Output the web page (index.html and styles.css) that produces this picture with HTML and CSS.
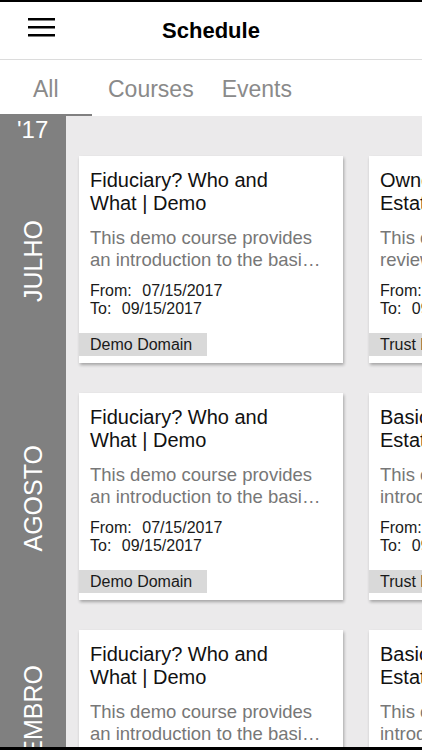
FILE: index.html
```html
<!DOCTYPE html>
<html lang="en">
<head>
    <meta charset="UTF-8">
    <meta name="viewport" content="width=device-width, initial-scale=1.0">
    <title>Schedule</title>
    <link rel="stylesheet" href="styles.css">
</head>
<body>
    <div class="app">
        <header class="top-bar">
            <div class="menu-button">
                <svg width="27" height="19" viewBox="0 0 27 19">
                    <rect x="0" y="0" width="27" height="2.5" fill="#000"/>
                    <rect x="0" y="8" width="27" height="2.5" fill="#000"/>
                    <rect x="0" y="16" width="27" height="2.5" fill="#000"/>
                </svg>
            </div>
            <h1 class="title">Schedule</h1>
            <div></div>
        </header>

        <nav class="tabs">
            <div class="tab tab-all active">All</div>
            <div class="tab">Courses</div>
            <div class="tab">Events</div>
        </nav>

        <div class="timeline">
            <div class="year-row">
                <div class="rail">'17</div>
            </div>

            <div class="month-row">
                <div class="rail"><span class="month">JULHO</span></div>
                <div class="cards">
                    <div class="card">
                        <div class="card-body">
                            <div class="card-title">Fiduciary? Who and What | Demo</div>
                            <div class="card-desc">This demo course provides an introduction to the basics of fiduciary duties.</div>
                            <div class="card-dates">
                                <div><span class="label-from">From:</span> 07/15/2017</div>
                                <div><span class="label-to">To:</span> 09/15/2017</div>
                            </div>
                        </div>
                        <div class="tag">Demo Domain</div>
                    </div>
                    <div class="card">
                        <div class="card-body">
                            <div class="card-title">Ownership Transfer of Estate Assets</div>
                            <div class="card-desc">This course provides a review of how estate assets are owned.</div>
                            <div class="card-dates">
                                <div><span class="label-from">From:</span> 07/20/2017</div>
                                <div><span class="label-to">To:</span> 09/20/2017</div>
                            </div>
                        </div>
                        <div class="tag">Trust Domain</div>
                    </div>
                </div>
            </div>

            <div class="month-row">
                <div class="rail"><span class="month">AGOSTO</span></div>
                <div class="cards">
                    <div class="card">
                        <div class="card-body">
                            <div class="card-title">Fiduciary? Who and What | Demo</div>
                            <div class="card-desc">This demo course provides an introduction to the basics of fiduciary duties.</div>
                            <div class="card-dates">
                                <div><span class="label-from">From:</span> 07/15/2017</div>
                                <div><span class="label-to">To:</span> 09/15/2017</div>
                            </div>
                        </div>
                        <div class="tag">Demo Domain</div>
                    </div>
                    <div class="card">
                        <div class="card-body">
                            <div class="card-title">Basics of Trust and Estate Planning</div>
                            <div class="card-desc">This course provides an introduction to estate planning.</div>
                            <div class="card-dates">
                                <div><span class="label-from">From:</span> 08/01/2017</div>
                                <div><span class="label-to">To:</span> 09/30/2017</div>
                            </div>
                        </div>
                        <div class="tag">Trust Domain</div>
                    </div>
                </div>
            </div>

            <div class="month-row">
                <div class="rail"><span class="month">SETEMBRO</span></div>
                <div class="cards">
                    <div class="card">
                        <div class="card-body">
                            <div class="card-title">Fiduciary? Who and What | Demo</div>
                            <div class="card-desc">This demo course provides an introduction to the basics of fiduciary duties.</div>
                            <div class="card-dates">
                                <div><span class="label-from">From:</span> 07/15/2017</div>
                                <div><span class="label-to">To:</span> 09/15/2017</div>
                            </div>
                        </div>
                        <div class="tag">Demo Domain</div>
                    </div>
                    <div class="card">
                        <div class="card-body">
                            <div class="card-title">Basics of Trust and Estate Planning</div>
                            <div class="card-desc">This course provides an introduction to estate planning.</div>
                            <div class="card-dates">
                                <div><span class="label-from">From:</span> 09/01/2017</div>
                                <div><span class="label-to">To:</span> 10/31/2017</div>
                            </div>
                        </div>
                        <div class="tag">Trust Domain</div>
                    </div>
                </div>
            </div>
        </div>
    </div>
</body>
</html>
```

FILE: styles.css
```css
body {
    font-family: 'Liberation Sans', Arial, sans-serif;
    margin: 0;
    padding: 0;
    background-color: #ffffff;
}

.app {
    height: 750px;
    display: flex;
    flex-direction: column;
    overflow: hidden;
    box-sizing: border-box;
    border-top: 2px solid #000;
    border-bottom: 3px solid #000;
}

.top-bar {
    flex-shrink: 0;
    display: grid;
    grid-template-columns: 1fr auto 1fr;
    height: 57px;
    background-color: #fff;
    border-bottom: 1px solid #dcdcdc;
}

.menu-button {
    padding-left: 28px;
    padding-top: 16px;
}

.menu-button svg {
    display: block;
}

.title {
    margin: 0;
    font-size: 22px;
    font-weight: bold;
    line-height: 57px;
    color: #000;
}

.tabs {
    flex-shrink: 0;
    display: flex;
    height: 56px;
    background-color: #fff;
}

.tab {
    box-sizing: border-box;
    height: 56px;
    padding: 4px 12px 0 16px;
    line-height: 50px;
    font-size: 23px;
    color: #8a8a8a;
}

.tab-all {
    width: 92px;
    padding-left: 33px;
}

.tab.active {
    border-bottom: 2px solid #808080;
}

.timeline {
    flex: 1;
    overflow: hidden;
    background-color: #ebeaeb;
}

.year-row {
    display: flex;
    height: 29px;
}

.year-row .rail {
    padding-left: 17px;
    box-sizing: border-box;
    font-size: 24px;
    line-height: 28px;
    color: #fff;
}

.rail {
    width: 66px;
    flex-shrink: 0;
    background-color: #808080;
}

.month-row {
    display: flex;
    height: 237px;
}

.month-row .rail {
    display: flex;
    align-items: center;
    justify-content: center;
    padding-bottom: 5px;
    box-sizing: border-box;
}

.month {
    writing-mode: vertical-rl;
    transform: rotate(180deg);
    font-size: 25px;
    color: #fff;
    white-space: nowrap;
}

.cards {
    display: flex;
    gap: 26px;
    padding: 11px 0 0 13px;
    overflow: hidden;
}

.card {
    flex-shrink: 0;
    display: flex;
    flex-direction: column;
    width: 264px;
    height: 207px;
    box-sizing: border-box;
    padding-bottom: 7px;
    background-color: #fff;
    box-shadow: 1px 2px 3px rgba(0, 0, 0, 0.3);
}

.card-body {
    padding: 13px 20px 0 11px;
}

.card-title {
    max-width: 205px;
    font-size: 20px;
    line-height: 23px;
    color: #111;
}

.card-desc {
    margin-top: 12px;
    font-size: 18.5px;
    line-height: 22px;
    color: #777;
    display: -webkit-box;
    -webkit-line-clamp: 2;
    -webkit-box-orient: vertical;
    overflow: hidden;
}

.card-dates {
    margin-top: 11px;
    font-size: 16px;
    line-height: 18px;
    color: #1a1a1a;
}

.label-from,
.label-to {
    margin-right: 6px;
}

.tag {
    margin-top: auto;
    width: 128px;
    height: 23px;
    box-sizing: border-box;
    padding-left: 11px;
    line-height: 23px;
    font-size: 16px;
    color: #1a1a1a;
    background-color: #d9d9d9;
    white-space: nowrap;
    overflow: hidden;
}
```
